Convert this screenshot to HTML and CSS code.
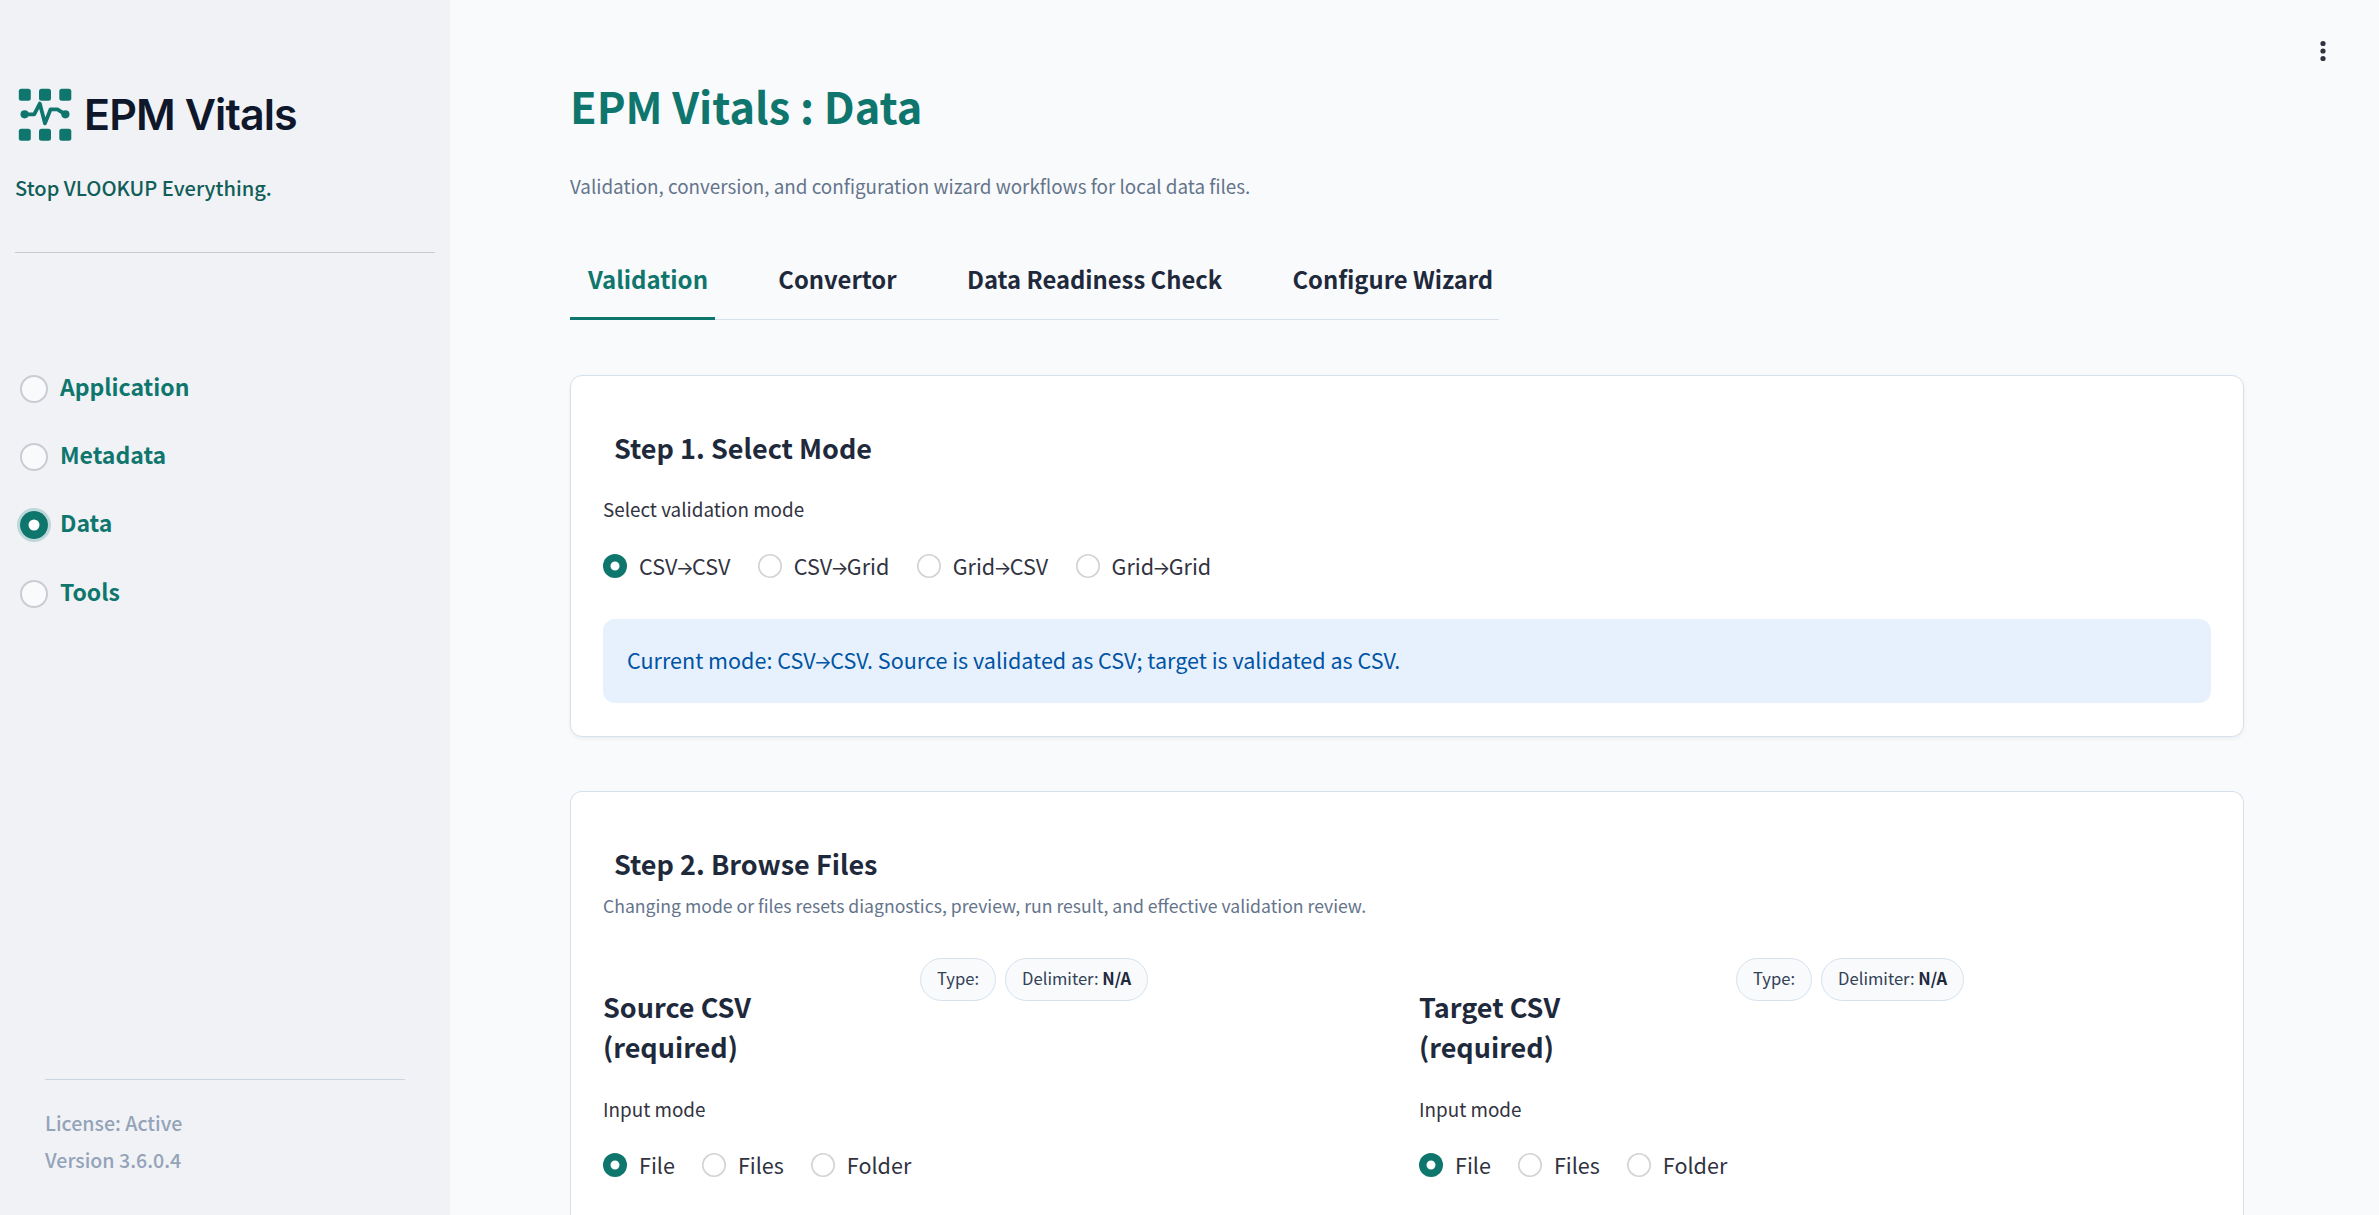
FILE: index.html
```
<!DOCTYPE html>
<html lang="en">
<head>
<meta charset="utf-8">
<title>EPM Vitals : Data</title>
<link rel="stylesheet" href="styles.css">
</head>
<body>
<div class="app">
  <aside class="sidebar">
    <div class="brand">
      <svg class="brand-icon" width="54" height="54" viewBox="0 0 54 54" fill="#0f766e">
        <rect x="0.8" y="0.8" width="12" height="12" rx="2.5"/>
        <rect x="21" y="0.8" width="12" height="12" rx="2.5"/>
        <rect x="41.3" y="0.8" width="12" height="12" rx="2.5"/>
        <rect x="0.8" y="40.7" width="12" height="12" rx="2.5"/>
        <rect x="21" y="40.7" width="12" height="12" rx="2.5"/>
        <rect x="41.3" y="40.7" width="12" height="12" rx="2.5"/>
        <circle cx="6.6" cy="26.3" r="4.1"/>
        <circle cx="47.4" cy="26.3" r="4.1"/>
        <path d="M6.6 26.3H16.2L21.8 15.6L27 35.4L32.6 21.3H39.4L47.4 26.3" fill="none" stroke="#0f766e" stroke-width="3.8" stroke-linejoin="round"/>
      </svg>
      <span class="brand-name">EPM Vitals</span>
    </div>
    <p class="tagline">Stop VLOOKUP Everything.</p>
    <nav class="nav">
      <a class="nav-item"><span class="nav-radio"></span>Application</a>
      <a class="nav-item"><span class="nav-radio"></span>Metadata</a>
      <a class="nav-item"><span class="nav-radio on"></span>Data</a>
      <a class="nav-item"><span class="nav-radio"></span>Tools</a>
    </nav>
    <footer class="meta">
      <div>License: Active</div>
      <div>Version 3.6.0.4</div>
    </footer>
  </aside>
  <main class="main">
    <svg class="menu" width="6" height="22" viewBox="0 0 6 22" fill="#31333f">
      <circle cx="3" cy="3.5" r="2.6"/><circle cx="3" cy="11" r="2.6"/><circle cx="3" cy="18.5" r="2.6"/>
    </svg>
    <h1 class="title">EPM Vitals : Data</h1>
    <p class="lead">Validation, conversion, and configuration wizard workflows for local data files.</p>
    <div class="tabs">
      <div class="tab active">Validation</div>
      <div class="tab">Convertor</div>
      <div class="tab">Data Readiness Check</div>
      <div class="tab">Configure Wizard</div>
    </div>
    <section class="card">
      <h2 class="step">Step 1. Select Mode</h2>
      <div class="label">Select validation mode</div>
      <div class="radios">
        <div class="radio"><span class="dot on"></span><span>CSV<span class="arrow">→</span>CSV</span></div>
        <div class="radio"><span class="dot"></span><span>CSV<span class="arrow">→</span>Grid</span></div>
        <div class="radio"><span class="dot"></span><span>Grid<span class="arrow">→</span>CSV</span></div>
        <div class="radio"><span class="dot"></span><span>Grid<span class="arrow">→</span>Grid</span></div>
      </div>
      <div class="alert">Current mode: CSV<span class="arrow">→</span>CSV. Source is validated as CSV; target is validated as CSV.</div>
    </section>
    <section class="card files">
      <h2 class="step">Step 2. Browse Files</h2>
      <p class="note">Changing mode or files resets diagnostics, preview, run result, and effective validation review.</p>
      <div class="columns">
        <div class="column">
          <div class="column-head">
            <h3 class="name">Source CSV<br>(required)</h3>
            <div class="pills"><span class="pill">Type:</span><span class="pill">Delimiter: <b>N/A</b></span></div>
          </div>
          <div class="label input-label">Input mode</div>
          <div class="radios">
            <div class="radio"><span class="dot on"></span><span>File</span></div>
            <div class="radio"><span class="dot"></span><span>Files</span></div>
            <div class="radio"><span class="dot"></span><span>Folder</span></div>
          </div>
        </div>
        <div class="column">
          <div class="column-head">
            <h3 class="name">Target CSV<br>(required)</h3>
            <div class="pills"><span class="pill">Type:</span><span class="pill">Delimiter: <b>N/A</b></span></div>
          </div>
          <div class="label input-label">Input mode</div>
          <div class="radios">
            <div class="radio"><span class="dot on"></span><span>File</span></div>
            <div class="radio"><span class="dot"></span><span>Files</span></div>
            <div class="radio"><span class="dot"></span><span>Folder</span></div>
          </div>
        </div>
      </div>
    </section>
  </main>
</div>
</body>
</html>
```
FILE: styles.css
```
* { box-sizing: border-box; margin: 0; padding: 0; }
body {
  font-family: "Noto Sans CJK SC", "Noto Sans", sans-serif;
  font-size: 21.55px;
  color: #31333f;
  background: #f9fafc;
}
.app { display: flex; height: 1215px; }

.sidebar {
  width: 450px;
  flex: none;
  background: #f0f2f6;
  display: flex;
  flex-direction: column;
  padding-top: 88px;
}
.brand { display: flex; align-items: center; height: 54px; padding-left: 18px; gap: 12px; }
.brand-icon { flex: none; }
.brand-name {
  font: 600 43px/53px Inter, sans-serif;
  height: 54px;
  letter-spacing: -0.9px;
  color: #0f172a;
}
.tagline {
  margin: 29px 15px 0;
  padding-bottom: 48px;
  border-bottom: 1px solid #c9cbd0;
  font-size: 20.1px;
  line-height: 33px;
  font-weight: 500;
  color: #115e59;
}
.nav { margin-top: 102px; padding-left: 20px; }
.nav-item {
  display: flex;
  align-items: center;
  gap: 12px;
  height: 68.4px;
  font-size: 23px;
  line-height: 28px;
  font-weight: 700;
  color: #0f766e;
  padding-bottom: 7px;
}
.nav-radio {
  width: 28px;
  height: 28px;
  border-radius: 50%;
  border: 2px solid #caccd3;
  background: #f9fafc;
  margin-top: 6px;
}
.nav-radio.on {
  background: #fff;
  border: 0;
  box-shadow: inset 0 0 0 8.5px #0f766e, 0 0 0 3px rgba(15, 118, 110, 0.22);
}
.meta {
  margin: auto 45px 37px;
  border-top: 1px solid #cbd5e1;
  padding-top: 24px;
  font-size: 19.6px;
  line-height: 37px;
  font-weight: 500;
  color: #94a3b8;
}

.main { flex: 1; position: relative; padding: 76px 135px 0 120px; }
.menu { position: absolute; top: 40px; right: 53px; }
.title { font-size: 43.3px; line-height: 58px; font-weight: 700; color: #0f766e; }
.lead { margin-top: 36px; font-size: 18.82px; line-height: 32px; color: #64748b; }
.tabs {
  display: flex;
  gap: 45.3px;
  width: 929px;
  height: 59px;
  margin-top: 59px;
  box-shadow: inset 0 -1px #d8e0ea;
}
.tab {
  padding: 0 7px 0 18px;
  font-size: 23.8px;
  line-height: 36px;
  font-weight: 700;
  color: #1e293b;
  white-space: nowrap;
}
.tab.active { width: 145px; font-size: 24px; color: #0f766e; border-bottom: 3px solid #0f766e; }

.card {
  margin-top: 55px;
  padding: 52px 32px 33px;
  border: 1px solid #d6e0ec;
  border-radius: 12px;
  background: #fff;
  box-shadow: 0 2px 4px rgba(15, 23, 42, 0.05);
}
.card.files {
  margin-top: 54px;
  height: 424px;
  padding-bottom: 0;
  border-bottom: 0;
  border-radius: 12px 12px 0 0;
  box-shadow: none;
}
.step { padding-left: 11px; font-size: 27px; line-height: 40px; color: #1e293b; }
.label { margin-top: 26px; font-size: 18.85px; line-height: 30px; }
.radios { display: flex; gap: 27.4px; margin-top: 30px; }
.radio { display: flex; align-items: center; gap: 12px; height: 24px; line-height: 24px; white-space: nowrap; }
.dot {
  width: 24px;
  height: 24px;
  flex: none;
  border-radius: 50%;
  background: #fff;
  box-shadow: inset 0 0 0 1.6px #d3d3d6;
}
.dot.on { box-shadow: inset 0 0 0 7.5px #0f766e; }
.arrow {
  display: inline-flex;
  justify-content: center;
  width: 14.6px;
  font-family: Inter, sans-serif;
  font-size: 19px;
  line-height: 1;
}
.alert {
  height: 84px;
  margin-top: 41px;
  padding-left: 24px;
  border-radius: 12px;
  background: #e7f1fe;
  color: #0054a3;
  line-height: 81px;
}
.note { margin-top: 7px; font-size: 17.63px; line-height: 29px; color: #64748b; }
.columns { display: grid; grid-template-columns: 1fr 1fr; gap: 24px; margin-top: 38px; }
.column-head { display: flex; }
.name { width: 317px; padding-top: 29px; font-size: 27px; line-height: 40px; color: #1e293b; }
.pills { display: flex; align-items: flex-start; gap: 9px; }
.pill {
  height: 43px;
  padding: 0 16px;
  border: 1px solid #d5e2ee;
  border-radius: 22px;
  background: #f8fafc;
  font-size: 16.6px;
  line-height: 39px;
  color: #334155;
  white-space: nowrap;
}
.pill b { color: #1e293b; }
.input-label { margin-top: 27px; }
.column .radios { gap: 27px; margin-top: 29px; }
```
